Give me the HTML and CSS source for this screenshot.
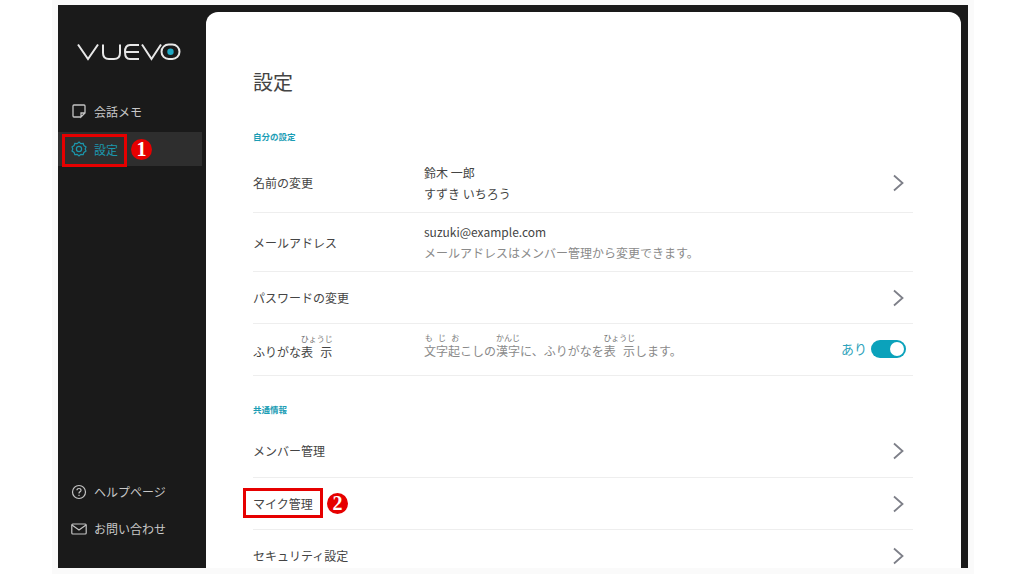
FILE: index.html
```html
<!DOCTYPE html>
<html lang="ja">
<head>
<meta charset="UTF-8">
<meta name="viewport" content="width=device-width, initial-scale=1.0">
<title>設定</title>
<link rel="stylesheet" href="styles.css">
</head>
<body>

<div class="frame">
    <aside class="sidebar">
        <div class="logo">
            <svg width="104" height="20" viewBox="0 0 104 20" fill="none" stroke="#e8e8e8" stroke-width="2">
                <path d="M1 2.500 L11 17 L21 2.500"/>
                <path d="M26 2.500 V11 Q26 17 32 17 H37 Q43 17 43 11 V2.500"/>
                <path d="M62 3 H53 Q48 3 48 10 Q48 17 53 17 H62 M49 10 H62"/>
                <path d="M65 2.500 L74.500 17 L84 2.500"/>
                <rect x="84.500" y="2.500" width="18" height="14.500" rx="7.200"/>
                <circle cx="93.500" cy="9.800" r="3.200" fill="#1ea9c4" stroke="none"/>
            </svg>
        </div>

        <nav class="menu">
            <a class="menu-item">
                <svg width="16" height="16" viewBox="0 0 16 16" fill="none" stroke="#c4c4c4" stroke-width="1.300">
                    <path d="M10 14 H3 Q2 14 2 13 V3 Q2 2 3 2 H13 Q14 2 14 3 V10 L10 14 V10 H14"/>
                </svg>
                <span>会話メモ</span>
            </a>
            <a class="menu-item active">
                <svg width="16" height="16" viewBox="0 0 16 16" fill="none" stroke="#1b97ad" stroke-width="1.200">
                    <path d="M8 1 L9.800 2.600 L12.200 2.300 L12.900 4.600 L15 6 L14.200 8 L15 10 L12.900 11.400 L12.200 13.700 L9.800 13.400 L8 15 L6.200 13.400 L3.800 13.700 L3.100 11.400 L1 10 L1.800 8 L1 6 L3.100 4.600 L3.800 2.300 L6.200 2.600 Z"/>
                    <circle cx="8" cy="8" r="2.600"/>
                </svg>
                <span>設定</span>
                <b class="marker marker-one">1</b>
            </a>
        </nav>

        <div class="menu menu-bottom">
            <a class="menu-item">
                <svg width="16" height="16" viewBox="0 0 16 16" fill="none" stroke="#c4c4c4" stroke-width="1.200">
                    <circle cx="8" cy="8" r="6.500"/>
                    <path d="M6 6.300 Q6 4.500 8 4.500 Q10 4.500 10 6.200 Q10 7.300 8.800 7.900 Q8 8.300 8 9.500"/>
                    <path d="M8 10.800 V12"/>
                </svg>
                <span>ヘルプページ</span>
            </a>
            <a class="menu-item">
                <svg width="16" height="16" viewBox="0 0 16 16" fill="none" stroke="#c4c4c4" stroke-width="1.200">
                    <rect x="0.800" y="3" width="14.400" height="10" rx="1"/>
                    <path d="M1 4 L8 9 L15 4"/>
                </svg>
                <span>お問い合わせ</span>
            </a>
        </div>
    </aside>

    <main class="panel">
        <h1>設定</h1>

        <h2 class="section-title">自分の設定</h2>
        <div class="row row-name">
            <div class="row-label">名前の変更</div>
            <div class="row-value">
                <div>鈴木 一郎</div>
                <div>すずき いちろう</div>
            </div>
            <svg class="chevron" width="12" height="18" viewBox="0 0 12 18"><path d="M2 1.500 L10.500 9 L2 16.500"/></svg>
        </div>
        <div class="row row-mail">
            <div class="row-label">メールアドレス</div>
            <div class="row-value">
                <div>suzuki@example.com</div>
                <div class="note">メールアドレスはメンバー管理から変更できます。</div>
            </div>
        </div>
        <div class="row">
            <div class="row-label">パスワードの変更</div>
            <svg class="chevron" width="12" height="18" viewBox="0 0 12 18"><path d="M2 1.500 L10.500 9 L2 16.500"/></svg>
        </div>
        <div class="row row-furigana">
            <div class="row-label">ふりがな<ruby>表&#8194;示<rt>ひょうじ</rt></ruby></div>
            <div class="row-value note"><ruby>文字起<rt>も じ お</rt></ruby>こしの<ruby>漢字<rt>かんじ</rt></ruby>に、ふりがなを<ruby>表&#8194;示<rt>ひょうじ</rt></ruby>します。</div>
            <div class="switch-wrap">
                <span class="switch-label">あり</span>
                <span class="switch"><i></i></span>
            </div>
        </div>

        <h2 class="section-title section-second">共通情報</h2>
        <div class="row row-shared row-first">
            <div class="row-label">メンバー管理</div>
            <svg class="chevron" width="12" height="18" viewBox="0 0 12 18"><path d="M2 1.500 L10.500 9 L2 16.500"/></svg>
        </div>
        <div class="row row-shared">
            <div class="row-label">マイク管理</div>
            <span class="red-box box-mic"></span>
            <b class="marker marker-two">2</b>
            <svg class="chevron" width="12" height="18" viewBox="0 0 12 18"><path d="M2 1.500 L10.500 9 L2 16.500"/></svg>
        </div>
        <div class="row row-shared row-last">
            <div class="row-label">セキュリティ設定</div>
            <svg class="chevron" width="12" height="18" viewBox="0 0 12 18"><path d="M2 1.500 L10.500 9 L2 16.500"/></svg>
        </div>
    </main>

    <span class="red-box box-menu"></span>
</div>

</body>
</html>
```

FILE: styles.css
```css
html, body {
    height: 100%;
}
body {
    margin: 0;
    width: 1024px;
    height: 576px;
    overflow: hidden;
    background-color: #fff;
    font-family: "Noto Sans CJK JP", "Noto Sans", sans-serif;
    color: #444;
}

/* Dark app frame */
.frame {
    position: relative;
    box-sizing: border-box;
    display: flex;
    width: 910px;
    height: 563px;
    margin: 5px 0 0 58px;
    background-color: #1a1a1a;
    overflow: hidden;
    box-shadow: 0 0 0 6px #fafafa;
}

.sidebar {
    display: flex;
    flex-direction: column;
    width: 148px;
    flex-shrink: 0;
}
.logo {
    height: 20px;
    margin: 37px 0 0 19px;
}
.logo svg {
    display: block;
}
.menu {
    margin-top: 32px;
}
.menu-bottom {
    margin-top: auto;
    margin-bottom: 23px;
}
.menu-item {
    position: relative;
    display: flex;
    align-items: center;
    gap: 7px;
    height: 34px;
    padding-left: 13px;
    margin-right: 4px;
    font-size: 12px;
    color: #c8c8c8;
}
.menu-item + .menu-item {
    margin-top: 4px;
}
.menu .menu-item.active {
    background-color: #2e2e2e;
    color: #1b97ad;
}
.menu-bottom .menu-item {
    height: 33px;
}

.red-box {
    position: absolute;
    border: 3px solid #e60000;
    box-sizing: border-box;
}
.box-menu {
    left: 4px;
    top: 129px;
    width: 65px;
    height: 33px;
}
.box-mic {
    left: -10px;
    top: 10px;
    width: 80px;
    height: 30px;
}
.marker {
    position: absolute;
    display: flex;
    align-items: center;
    justify-content: center;
    width: 21px;
    height: 21px;
    border-radius: 50%;
    background-color: #e60000;
    color: #fff;
    font-family: "Liberation Serif", serif;
    font-size: 20px;
}
.marker-one {
    left: 73px;
    top: 7px;
}
.marker-two {
    left: 74px;
    top: 15px;
}

/* White settings panel */
.panel {
    flex: 1;
    box-sizing: border-box;
    height: 576px;
    margin: 7px 7px 0 0;
    padding: 0 48px 0 47px;
    background-color: #fff;
    border-radius: 12px 12px 0 0;
    overflow: hidden;
}
h1 {
    margin: 55px 0 0;
    font-size: 20px;
    line-height: 30px;
    font-weight: 400;
    color: #444;
}
.section-title {
    margin: 33px 0 17px;
    font-size: 8.500px;
    line-height: 12px;
    font-weight: 700;
    color: #1b9db5;
}
.section-second {
    margin: 27px 0 10px;
}
.row {
    position: relative;
    display: flex;
    align-items: center;
    height: 51px;
    border-bottom: 1px solid #eeeeee;
    font-size: 12px;
}
.row-name {
    height: 47px;
    padding-bottom: 6px;
}
.row-name .chevron {
    margin-top: -12px;
}
.row-mail {
    height: 58px;
}
.row-furigana {
    height: 49px;
    padding-bottom: 2px;
}
.row-shared {
    height: 50px;
    padding-bottom: 1px;
}
.row-first {
    height: 51px;
}
.row-last {
    border-bottom: none;
}
.row-label {
    width: 171px;
    flex-shrink: 0;
}
.row-value {
    flex: 1;
    line-height: 21px;
}
.note {
    color: #8a8a8a;
}
/* furigana sits clear of the kanji below it */
rt {
    position: relative;
    top: -3px;
    font-size: 8px;
    color: #777;
}
.chevron {
    position: absolute;
    right: 9px;
    top: 50%;
    margin-top: -9px;
    fill: none;
    stroke: #7d7f88;
    stroke-width: 1.800;
}
.switch-wrap {
    display: flex;
    align-items: center;
    gap: 4px;
    margin-right: 7px;
}
.switch-label {
    font-size: 13px;
    color: #2fa3bb;
}
.switch {
    display: flex;
    justify-content: flex-end;
    align-items: center;
    box-sizing: border-box;
    width: 35px;
    height: 18px;
    padding-right: 2px;
    border-radius: 9px;
    background-color: #0ba2bb;
}
.switch i {
    width: 14px;
    height: 14px;
    border-radius: 50%;
    background-color: #fff;
}
```
